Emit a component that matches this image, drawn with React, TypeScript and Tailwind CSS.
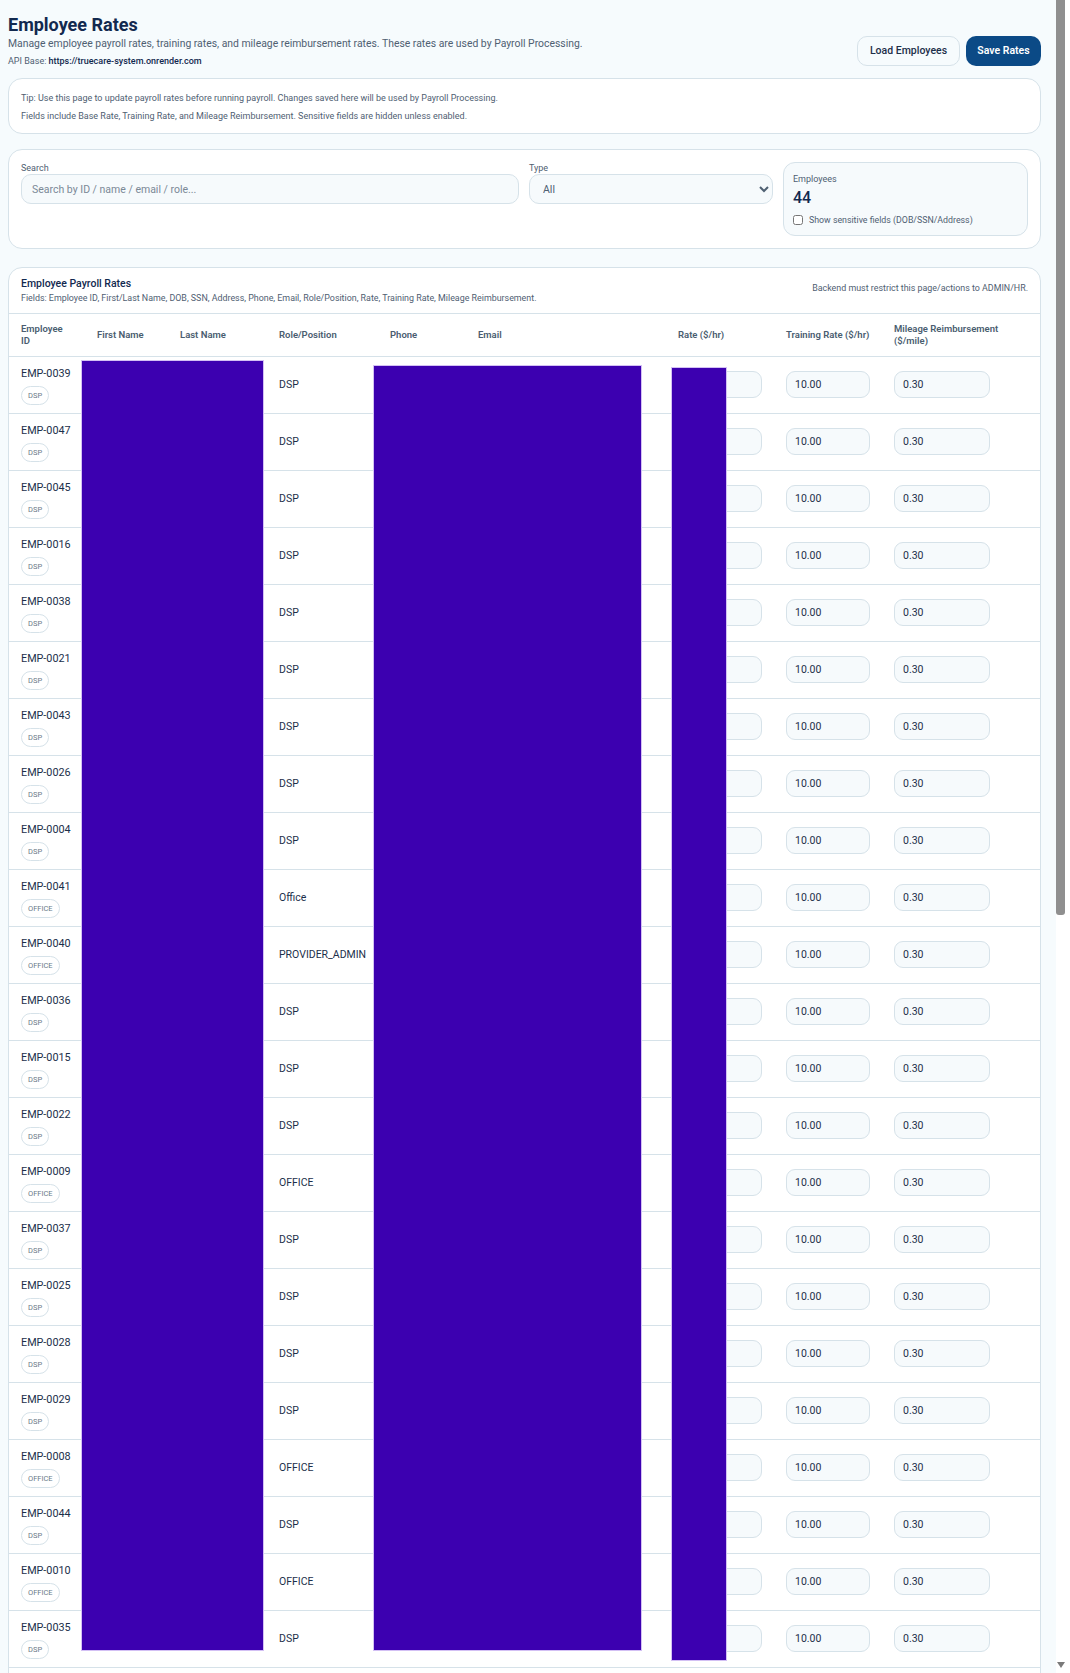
const rows = [
  ['EMP-0039', 'DSP', 'DSP'],
  ['EMP-0047', 'DSP', 'DSP'],
  ['EMP-0045', 'DSP', 'DSP'],
  ['EMP-0016', 'DSP', 'DSP'],
  ['EMP-0038', 'DSP', 'DSP'],
  ['EMP-0021', 'DSP', 'DSP'],
  ['EMP-0043', 'DSP', 'DSP'],
  ['EMP-0026', 'DSP', 'DSP'],
  ['EMP-0004', 'DSP', 'DSP'],
  ['EMP-0041', 'OFFICE', 'Office'],
  ['EMP-0040', 'OFFICE', 'PROVIDER_ADMIN'],
  ['EMP-0036', 'DSP', 'DSP'],
  ['EMP-0015', 'DSP', 'DSP'],
  ['EMP-0022', 'DSP', 'DSP'],
  ['EMP-0009', 'OFFICE', 'OFFICE'],
  ['EMP-0037', 'DSP', 'DSP'],
  ['EMP-0025', 'DSP', 'DSP'],
  ['EMP-0028', 'DSP', 'DSP'],
  ['EMP-0029', 'DSP', 'DSP'],
  ['EMP-0008', 'OFFICE', 'OFFICE'],
  ['EMP-0044', 'DSP', 'DSP'],
  ['EMP-0010', 'OFFICE', 'OFFICE'],
  ['EMP-0035', 'DSP', 'DSP'],
];

const headers = [
  { label: 'Employee ID', width: 'w-[76px]' },
  { label: 'First Name', width: 'w-[83px]' },
  { label: 'Last Name', width: 'w-[99px]' },
  { label: 'Role/Position', width: 'w-[111px]' },
  { label: 'Phone', width: 'w-[88px]' },
  { label: 'Email', width: 'w-[200px]' },
  { label: 'Rate ($/hr)', width: 'w-[108px]' },
  { label: 'Training Rate ($/hr)', width: 'w-[108px]' },
  { label: 'Mileage Reimbursement ($/mile)', width: 'w-[158px]' },
];

const cellInput =
  'h-[27px] rounded-[9px] border border-[#d6e2e9] bg-[#f6fafc] px-[8px] text-[10.5px] text-[#1c2f4a] outline-none';

export default function App() {
  return (
    <div className="relative flex h-[1673px] w-[1070px] overflow-hidden bg-white font-['Roboto',sans-serif] text-[#1c2f4a]">
      <main className="w-[1056px] shrink-0 bg-[#f6fbfd] pl-2 pr-[15px] pt-[13px]">
        <div className="mb-[10px] flex items-end justify-between">
          <div>
            <h1 className="text-[18px] font-bold leading-[24px] text-[#12294f]">Employee Rates</h1>
            <p className="text-[10.4px] leading-[14px] text-[#4f6072]">
              Manage employee payroll rates, training rates, and mileage reimbursement rates. These rates are used by Payroll Processing.
            </p>
            <p className="mt-[3px] text-[9px] leading-[14px] text-[#4f6072]">
              API Base: <span className="font-medium text-[#12294f]">https://truecare-system.onrender.com</span>
            </p>
          </div>
          <div className="mb-[2px] flex gap-[6px]">
            <button className="h-[30px] w-[103px] rounded-[10px] border border-[#d6e2e9] bg-[#f6fbfd] text-[10.5px] font-medium text-[#1c2f4a]">
              Load Employees
            </button>
            <button className="h-[30px] w-[75px] rounded-[10px] bg-[#0b4a86] text-[10.5px] font-semibold text-white">
              Save Rates
            </button>
          </div>
        </div>

        <section className="mb-[15px] h-[56px] rounded-[14px] border border-[#d6e2e9] bg-white px-3 pt-[10px] text-[9px] leading-[18px] text-[#4f6072]">
          <div>Tip: Use this page to update payroll rates before running payroll. Changes saved here will be used by Payroll Processing.</div>
          <div>Fields include Base Rate, Training Rate, and Mileage Reimbursement. Sensitive fields are hidden unless enabled.</div>
        </section>

        <section className="mb-[18px] grid h-[100px] grid-cols-[1fr_244px_245px] gap-[10px] rounded-[14px] border border-[#d6e2e9] bg-white px-3 pt-3">
          <label className="block">
            <span className="block h-3 text-[9px] leading-3 text-[#4f6072]">Search</span>
            <input
              placeholder="Search by ID / name / email / role..."
              className="h-[30px] w-full rounded-[10px] border border-[#d6e2e9] bg-[#f6fafc] px-[10px] text-[10.5px] outline-none placeholder:text-[#7b8997]"
            />
          </label>
          <label className="block">
            <span className="block h-3 text-[9px] leading-3 text-[#4f6072]">Type</span>
            <select className="h-[30px] w-full rounded-[10px] border border-[#d6e2e9] bg-[#f6fafc] px-[9px] text-[10.5px] text-[#4f6072]">
              <option>All</option>
            </select>
          </label>
          <div className="h-[74px] rounded-[12px] border border-[#d6e2e9] bg-[#f6fafc] px-[9px] pt-[9px]">
            <div className="text-[9px] leading-[14px] text-[#4f6072]">Employees</div>
            <div className="mt-[2px] text-[16px] font-medium leading-[20px] text-[#12294f]">44</div>
            <label className="mt-[5px] flex items-center gap-[6px] text-[8.8px] leading-[14px] text-[#4f6072]">
              <input type="checkbox" className="m-0 h-[10px] w-[10px]" />
              Show sensitive fields (DOB/SSN/Address)
            </label>
          </div>
        </section>

        <section className="rounded-t-[14px] border border-[#d6e2e9] bg-white pb-10">
          <div className="flex h-[46px] items-center justify-between border-b border-[#d6e2e9] px-3">
            <div>
              <div className="text-[10.5px] font-medium leading-[15px] text-[#12294f]">Employee Payroll Rates</div>
              <div className="text-[8.9px] leading-[14px] text-[#4f6072]">
                Fields: Employee ID, First/Last Name, DOB, SSN, Address, Phone, Email, Role/Position, Rate, Training Rate, Mileage Reimbursement.
              </div>
            </div>
            <div className="mb-[3px] text-[8.9px] text-[#4f6072]">Backend must restrict this page/actions to ADMIN/HR.</div>
          </div>

          <table className="w-full table-fixed border-separate border-spacing-0">
            <thead>
              <tr>
                {headers.map((h) => (
                  <th
                    key={h.label}
                    className={`${h.width} h-[43px] border-b border-[#d6e2e9] px-3 text-left align-middle text-[9.5px] font-semibold leading-[12px] text-[#4a5d70]`}
                  >
                    {h.label}
                  </th>
                ))}
              </tr>
            </thead>
            <tbody>
              {rows.map(([id, badge, role]) => (
                <tr key={id} className="h-[57px]">
                  <td className="border-b border-[#d6e2e9] pl-3 pt-[10px] align-top">
                    <div className="text-[10.8px] leading-[14px] text-[#1c2f4a]">{id}</div>
                    <span className="mt-[4px] inline-flex h-[19px] items-center rounded-full border border-[#d6e2e9] px-[6px] text-[7.5px] text-[#6a7988]">
                      {badge}
                    </span>
                  </td>
                  <td className="border-b border-[#d6e2e9]"></td>
                  <td className="border-b border-[#d6e2e9]"></td>
                  <td className="border-b border-[#d6e2e9] pl-3 text-[10.5px] align-middle">{role}</td>
                  <td className="border-b border-[#d6e2e9]"></td>
                  <td className="border-b border-[#d6e2e9]"></td>
                  <td className="border-b border-[#d6e2e9] pb-[1px] pl-3 align-middle">
                    <input className={`${cellInput} w-[84px]`} />
                  </td>
                  <td className="border-b border-[#d6e2e9] pb-[1px] pl-3 align-middle">
                    <input defaultValue="10.00" className={`${cellInput} w-[84px]`} />
                  </td>
                  <td className="border-b border-[#d6e2e9] pb-[1px] pl-3 align-middle">
                    <input defaultValue="0.30" className={`${cellInput} w-[96px]`} />
                  </td>
                </tr>
              ))}
            </tbody>
          </table>
        </section>
      </main>

      <aside className="relative flex-1 bg-white">
        <div className="h-[915px] w-[9px] rounded-b-[3px] bg-[#8f8f8f]"></div>
        <svg viewBox="0 0 8 6" className="absolute bottom-[5px] left-[1px] h-[6px] w-[8px]">
          <path d="M0 0h8L4 6z" fill="#7a7a7a" />
        </svg>
      </aside>

      {/* redaction blocks over the personal columns */}
      <div className="absolute left-[82px] top-[361px] h-[1289px] w-[181px] bg-[#3c00b0] outline-1 outline-[#d3c0f4]"></div>
      <div className="absolute left-[374px] top-[366px] h-[1284px] w-[267px] bg-[#3c00b0] outline-1 outline-[#d3c0f4]"></div>
      <div className="absolute left-[672px] top-[368px] h-[1292px] w-[54px] bg-[#3c00b0] outline-1 outline-[#d3c0f4]"></div>
    </div>
  );
}
